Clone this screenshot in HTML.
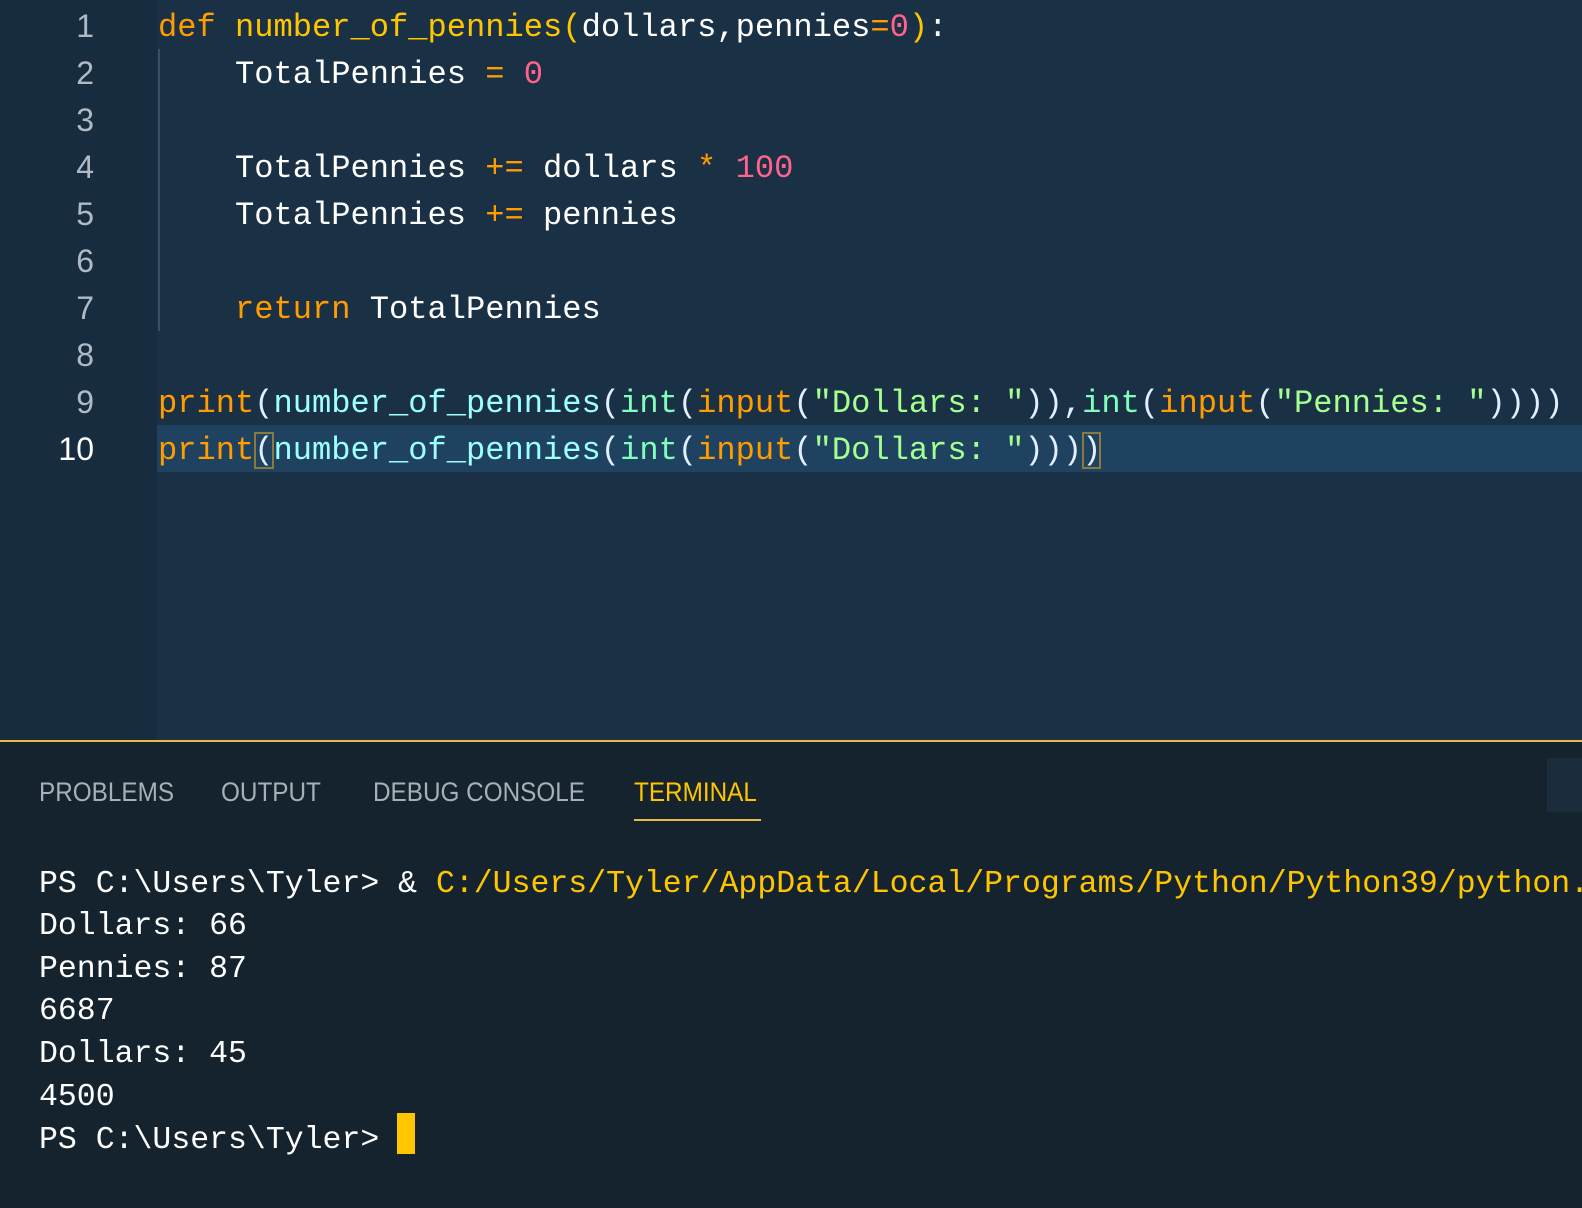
<!DOCTYPE html>
<html><head><meta charset="utf-8"><style>
body{margin:0;width:1582px;height:1206px;background:#1a3044;overflow:hidden;position:relative;font-family:"Liberation Mono",monospace}
#gut{position:absolute;left:0;top:0;width:157px;height:740px;background:#182c40}
#ed{position:absolute;left:0;top:0;width:1582px;height:740px}
.ln{position:absolute;left:0;width:94px;text-align:right;color:#b0bac4;font-family:"Liberation Sans",sans-serif;font-size:32px;height:47px;line-height:49px}
.cl{position:absolute;left:158px;height:47px;line-height:51px;font-size:32.1px;color:#fff;white-space:pre}
.k{color:#ff9d00}.f{color:#ffc600}.n{color:#ff628c}.s{color:#a5ff90}.c{color:#9effff}.b{color:#80ffbb}.o{color:#ff9d00}.p{color:#e1efff}
#hl{position:absolute;left:157px;top:425px;width:1425px;height:47px;background:#1f4260}
#guide{position:absolute;left:158px;top:49px;width:2px;height:282px;background:#3a4f63}
#panel{position:absolute;left:0;top:740px;width:1582px;height:466px;background:#15232f;border-top:2px solid #e8b84a}
.tab{position:absolute;top:777px;font-family:"Liberation Sans",sans-serif;font-size:27px;color:#a7b0b8;transform-origin:left top;transform:scaleX(0.9)}
.tl{position:absolute;left:39px;font-size:31.5px;color:#fff;white-space:pre;line-height:43px;height:43px}
</style></head><body>
<div id="ed"></div><div id="gut"></div>
<div id="hl"></div><div id="guide"></div>
<div class="ln" style="top:2px">1</div>
<div class="ln" style="top:49px">2</div>
<div class="ln" style="top:96px">3</div>
<div class="ln" style="top:143px">4</div>
<div class="ln" style="top:190px">5</div>
<div class="ln" style="top:237px">6</div>
<div class="ln" style="top:284px">7</div>
<div class="ln" style="top:331px">8</div>
<div class="ln" style="top:378px">9</div>
<div class="ln" style="top:425px;color:#fff">10</div>
<div class="cl" style="top:2px"><span class="k">def</span> <span class="f">number_of_pennies</span><span class="f">(</span>dollars,pennies<span class="o">=</span><span class="n">0</span><span class="f">)</span>:</div>
<div class="cl" style="top:49px">    TotalPennies <span class="o">=</span> <span class="n">0</span></div>
<div class="cl" style="top:143px">    TotalPennies <span class="o">+=</span> dollars <span class="o">*</span> <span class="n">100</span></div>
<div class="cl" style="top:190px">    TotalPennies <span class="o">+=</span> pennies</div>
<div class="cl" style="top:284px">    <span class="k">return</span> TotalPennies</div>
<div class="cl" style="top:378px"><span class="k">print</span><span class="p">(</span><span class="c">number_of_pennies</span><span class="p">(</span><span class="b">int</span><span class="p">(</span><span class="k">input</span><span class="p">(</span><span class="s">"Dollars: "</span><span class="p">)),</span><span class="b">int</span><span class="p">(</span><span class="k">input</span><span class="p">(</span><span class="s">"Pennies: "</span><span class="p">))))</span></div>
<div class="cl" style="top:425px"><span class="k">print</span><span class="p" style="outline:2px solid #8a7a40;outline-offset:-2px">(</span><span class="c">number_of_pennies</span><span class="p">(</span><span class="b">int</span><span class="p">(</span><span class="k">input</span><span class="p">(</span><span class="s">"Dollars: "</span><span class="p">)))</span><span class="p" style="outline:2px solid #8a7a40;outline-offset:-2px">)</span></div>
<div id="panel"></div>
<div style="position:absolute;left:1547px;top:758px;width:35px;height:54px;background:#1b2d3d"></div>
<div class="tab" style="left:39px">PROBLEMS</div>
<div class="tab" style="left:221px">OUTPUT</div>
<div class="tab" style="left:373px">DEBUG CONSOLE</div>
<div class="tab" style="left:634px;color:#ffc600">TERMINAL</div>
<div style="position:absolute;left:634px;top:819px;width:127px;height:2px;background:#e8b84a"></div>
<div class="tl" style="top:863px">PS C:\Users\Tyler&gt; &amp; <span style="color:#ffc600">C:/Users/Tyler/AppData/Local/Programs/Python/Python39/python.exe</span></div>
<div class="tl" style="top:905px">Dollars: 66</div>
<div class="tl" style="top:948px">Pennies: 87</div>
<div class="tl" style="top:990px">6687</div>
<div class="tl" style="top:1033px">Dollars: 45</div>
<div class="tl" style="top:1076px">4500</div>
<div class="tl" style="top:1119px">PS C:\Users\Tyler&gt; </div>
<div style="position:absolute;left:397px;top:1113px;width:18px;height:41px;background:#ffc600"></div>
</body></html>
